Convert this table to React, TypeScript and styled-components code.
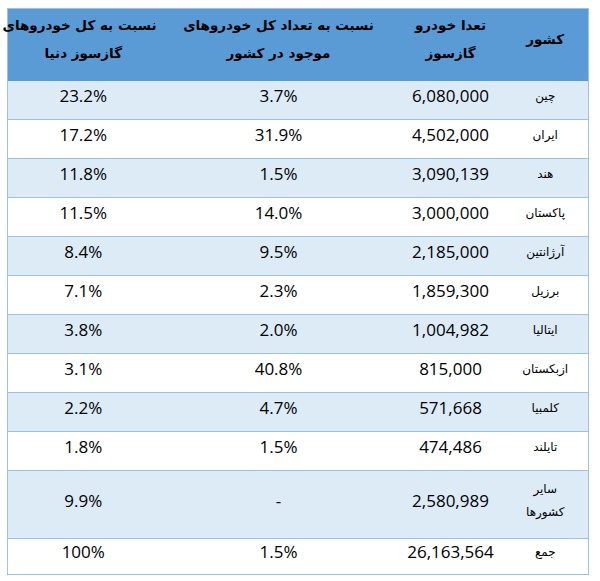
import styled, { createGlobalStyle } from 'styled-components'

const GlobalStyle = createGlobalStyle`
  body {
    margin: 0;
    background: #ffffff;
  }
`

interface Row {
  country: string[]
  count: string
  local: string
  world: string
}

const rows: Row[] = [
  { country: ['چین'], count: '6,080,000', local: '3.7%', world: '23.2%' },
  { country: ['ایران'], count: '4,502,000', local: '31.9%', world: '17.2%' },
  { country: ['هند'], count: '3,090,139', local: '1.5%', world: '11.8%' },
  { country: ['پاکستان'], count: '3,000,000', local: '14.0%', world: '11.5%' },
  { country: ['آرژانتین'], count: '2,185,000', local: '9.5%', world: '8.4%' },
  { country: ['برزیل'], count: '1,859,300', local: '2.3%', world: '7.1%' },
  { country: ['ایتالیا'], count: '1,004,982', local: '2.0%', world: '3.8%' },
  { country: ['ازبکستان'], count: '815,000', local: '40.8%', world: '3.1%' },
  { country: ['کلمبیا'], count: '571,668', local: '4.7%', world: '2.2%' },
  { country: ['تایلند'], count: '474,486', local: '1.5%', world: '1.8%' },
  { country: ['سایر', 'کشورها'], count: '2,580,989', local: '-', world: '9.9%' },
  { country: ['جمع'], count: '26,163,564', local: '1.5%', world: '100%' },
]

export default function App() {
  return (
    <Page>
      <GlobalStyle />
      <Table>
        <colgroup>
          <col style={{ width: 86 }} />
          <col style={{ width: 104 }} />
          <col style={{ width: 240 }} />
          <col style={{ width: 151 }} />
        </colgroup>
        <thead>
          <tr>
            <HeadCell>کشور</HeadCell>
            <HeadCell>
              تعدا خودرو
              <br />
              گازسوز
            </HeadCell>
            <HeadCell>
              نسبت به تعداد کل خودروهای
              <br />
              موجود در کشور
            </HeadCell>
            <HeadCell>
              نسبت به کل خودروهای
              <br />
              گازسوز دنیا
            </HeadCell>
          </tr>
        </thead>
        <tbody>
          {rows.map((r, i) => {
            const tall = r.country.length > 1
            const last = i === rows.length - 1
            return (
              <BodyRow key={i} shaded={i % 2 === 0}>
                <CountryCell tall={tall} last={last}>
                  {r.country.map((line, j) => (
                    <CountryLine key={j} tall={tall}>
                      {line}
                    </CountryLine>
                  ))}
                </CountryCell>
                <NumCell tall={tall} last={last}>{r.count}</NumCell>
                <NumCell tall={tall} last={last}>{r.local}</NumCell>
                <NumCell tall={tall} last={last}>{r.world}</NumCell>
              </BodyRow>
            )
          })}
        </tbody>
      </Table>
    </Page>
  )
}

const Page = styled.div`
  padding: 8px 0 0 7px;
`

const Table = styled.table`
  direction: rtl;
  width: 582px;
  table-layout: fixed;
  border-collapse: collapse;
  border: 1px solid #9bc2e6;
  color: #000000;
`

const HeadCell = styled.th`
  background: #5b9bd5;
  height: 71px;
  box-sizing: border-box;
  padding: 2px 2px 14px;
  text-align: center;
  vertical-align: middle;
  font-family: 'DejaVu Sans', sans-serif;
  font-weight: bold;
  font-size: 13.5px;
  line-height: 28px;
  white-space: nowrap;
`

const BodyRow = styled.tr<{ shaded: boolean }>`
  background: ${({ shaded }) => (shaded ? '#ddebf7' : '#ffffff')};
  border-bottom: 1px solid #9bc2e6;
`

interface CellProps {
  tall: boolean
  last: boolean
}

const NumCell = styled.td<CellProps>`
  height: ${({ tall, last }) => (tall ? '68px' : last ? '35px' : '38px')};
  box-sizing: border-box;
  padding: ${({ last }) => (last ? '2px 4px 11px' : '4px 4px 12px')};
  text-align: center;
  vertical-align: middle;
  font-family: 'Open Sans', 'Liberation Sans', sans-serif;
  font-size: 17px;
  line-height: 22px;
  white-space: nowrap;
`

const CountryCell = styled(NumCell)`
  font-family: 'DejaVu Sans', sans-serif;
  font-size: 12px;
`

const CountryLine = styled.div<{ tall: boolean }>`
  line-height: ${({ tall }) => (tall ? '23px' : '22px')};
`
